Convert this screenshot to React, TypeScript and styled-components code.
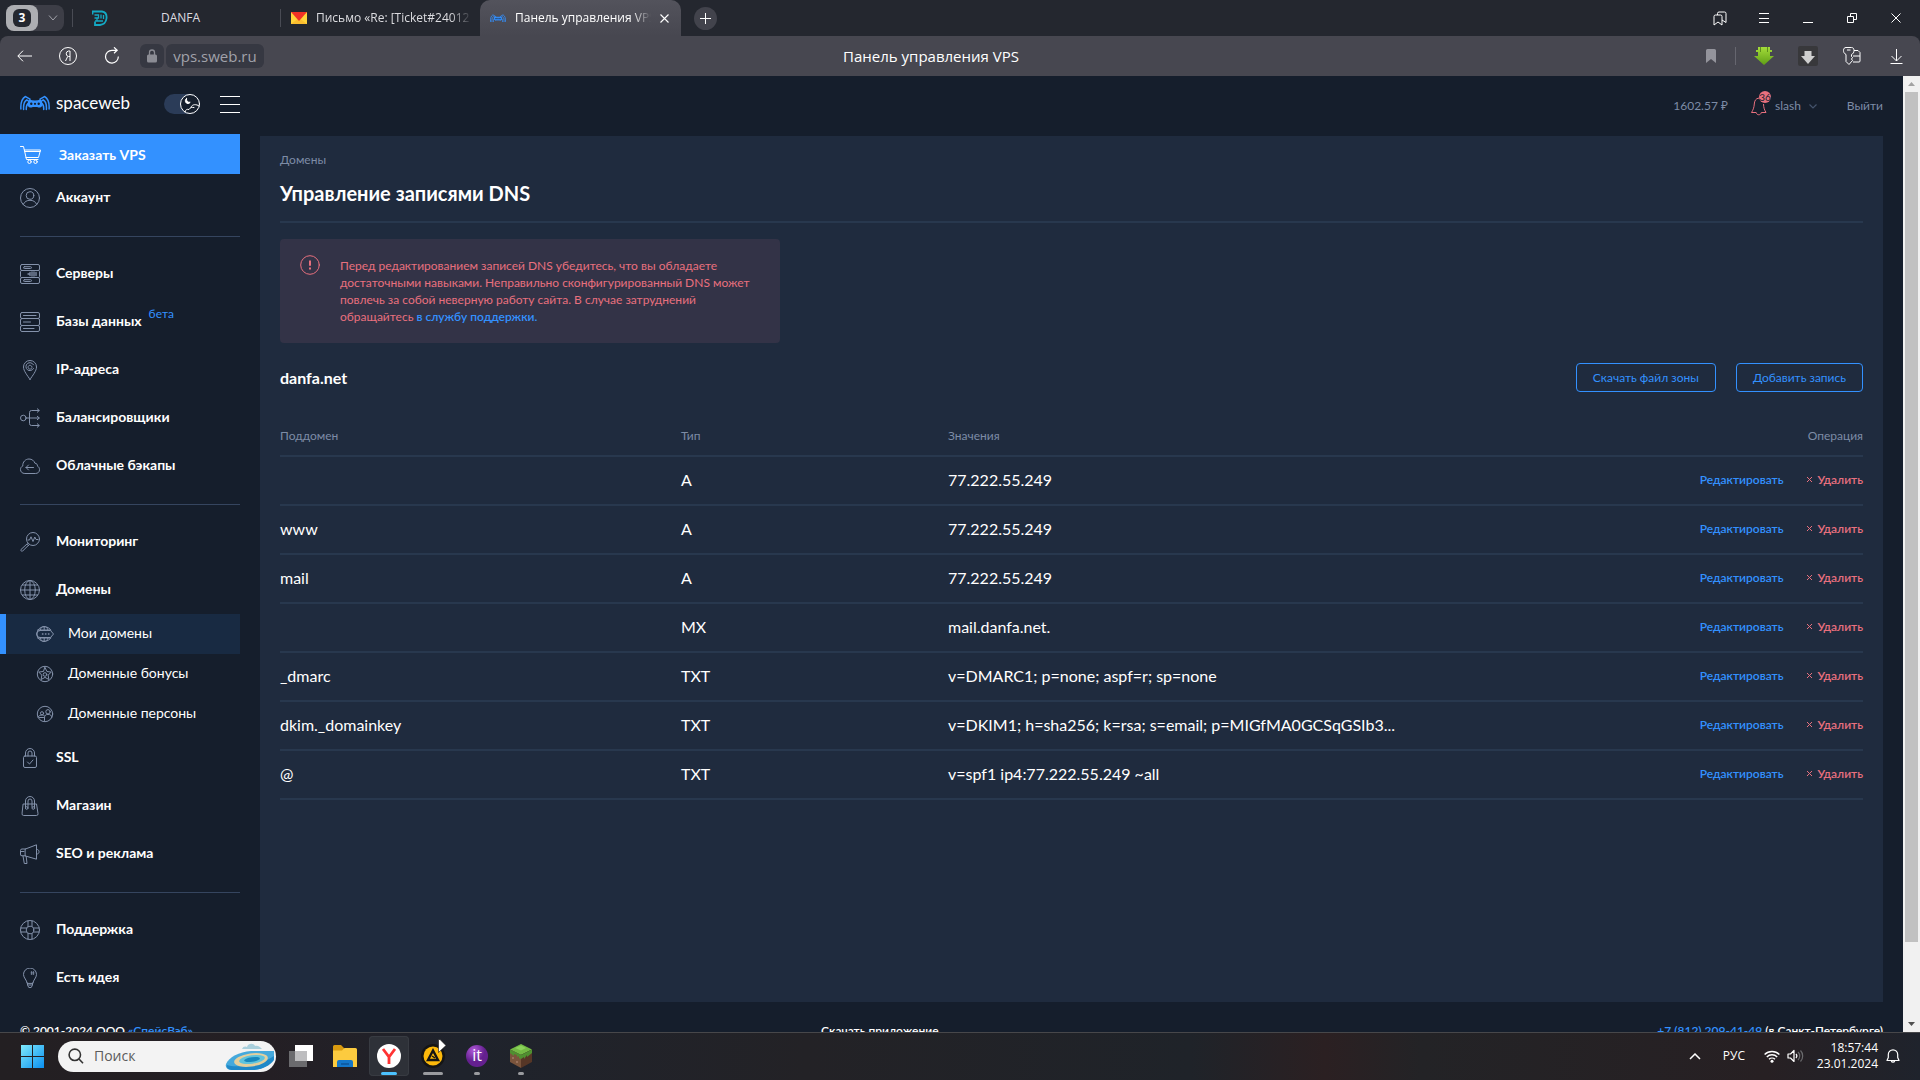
import React from "react";
import styled, { createGlobalStyle, css } from "styled-components";

const uiFont = `Lato, "Noto Sans", sans-serif`;
const systemFont = `"Open Sans", "Noto Sans", sans-serif`;

const color = {
  page: "#151e2c",
  panel: "#1f2b3e",
  line: "#28384e",
  divider: "#35455f",
  blue: "#3391ff",
  red: "#e8707e",
  muted: "#7d8ca6",
  icon: "#8492ab",
  white: "#ffffff",
};

const GlobalStyle = createGlobalStyle`
  *, *::before, *::after { box-sizing: border-box; }
  body { margin: 0; background: ${color.page}; color: ${color.white}; font-family: ${uiFont}; }
  button, input { font: inherit; color: inherit; }
  button { margin: 0; padding: 0; border: 0; background: none; cursor: pointer; }
  a { text-decoration: none; color: inherit; }
  svg { display: block; flex: none; }
`;

/* ---------- window frame ---------- */

const Screen = styled.div`
  display: flex;
  flex-direction: column;
  height: 100vh;
  overflow: hidden;
`;

const TabStrip = styled.header`
  flex: none;
  display: flex;
  align-items: center;
  height: 36px;
  padding-left: 6px;
  background: #24272f;
  font: 12px/18px ${systemFont};
`;

const TabGroup = styled.button`
  display: flex;
  align-items: center;
  width: 58px;
  height: 26px;
  margin-right: 8px;
  padding-right: 6px;
  justify-content: space-between;
  border-radius: 8px;
  background: #3d3e47;
`;

const TabCount = styled.span`
  display: grid;
  place-items: center;
  width: 32px;
  height: 26px;
  border-radius: 8px;
  background: #adaeb2;
  > span {
    width: 18px;
    height: 18px;
    border-radius: 6px;
    background: #24272f;
    font-weight: 700;
    text-align: center;
  }
`;

const StripDivider = styled.i`
  width: 1px;
  height: 18px;
  background: #494b54;
`;

const Tab = styled.button<{ $active?: boolean }>`
  display: flex;
  align-items: center;
  gap: 9px;
  height: 36px;
  padding: 0 10px;
  color: ${(p) => (p.$active ? "#fff" : "#dcdce0")};
  ${(p) =>
    p.$active &&
    css`
      border-radius: 10px 10px 0 0;
      background: linear-gradient(#53535c, #474750);
    `}
`;

const TabTitle = styled.span<{ $center?: boolean; $fade?: boolean }>`
  flex: 1;
  min-width: 0;
  overflow: hidden;
  white-space: nowrap;
  text-align: ${(p) => (p.$center ? "center" : "left")};
  ${(p) =>
    p.$fade &&
    css`
      mask-image: linear-gradient(90deg, #000 86%, transparent);
    `}
`;

const FirstTab = styled(Tab)`
  width: 207px;
  padding: 0 36px 0 19px;
`;
const MailTab = styled(Tab)`
  width: 199px;
  padding: 0 8px 0 10px;
`;
const ActiveTab = styled(Tab)`
  width: 201px;
  padding: 0 12px 0 10px;
`;

const AddTab = styled.button`
  display: grid;
  place-items: center;
  width: 23px;
  height: 23px;
  margin-left: 13px;
  border-radius: 50%;
  background: #42434c;
`;

const WindowButtons = styled.div`
  display: flex;
  margin-left: auto;
  padding-right: 2px;
`;

const BarButton = styled.button`
  display: grid;
  place-items: center;
  width: 44px;
  height: 36px;
`;

const ChromeBack = styled.div`
  flex: none;
  background: #24272f;
`;

const Toolbar = styled.div`
  display: grid;
  grid-template-columns: 1fr auto 1fr;
  align-items: center;
  height: 40px;
  padding: 0 2px;
  border-radius: 8px 8px 0 0;
  background: #474750;
  font: 15px/20px ${systemFont};
`;

const PageTitle = styled.span`
  margin-right: 58px;
`;

const NavGroup = styled.div<{ $end?: boolean }>`
  display: flex;
  align-items: center;
  justify-content: ${(p) => (p.$end ? "flex-end" : "flex-start")};
`;

const ToolDivider = styled(StripDivider)`
  margin: 0 6px 0 2px;
  background: #66666f;
`;

const AddressChip = styled.button<{ $wide?: boolean }>`
  display: grid;
  place-items: center;
  height: 24px;
  width: ${(p) => (p.$wide ? "98px" : "24px")};
  margin-left: ${(p) => (p.$wide ? "2px" : "6px")};
  border-radius: 6px;
  background: #363842;
  color: #a1a2aa;
`;

/* ---------- page viewport ---------- */

const Viewport = styled.div`
  flex: 1;
  min-height: 0;
  display: flex;
  overflow: hidden;
`;

const Page = styled.div`
  flex: 1;
  min-width: 0;
  height: calc(100% + 28px);
  display: flex;
  flex-direction: column;
  background: ${color.page};
`;

const ScrollTrack = styled.div`
  display: flex;
  flex-direction: column;
  align-items: center;
  justify-content: space-between;
  width: 17px;
  height: 100%;
  padding: 6px 0;
  background: #f1f1f1;
`;

const ScrollThumb = styled.i`
  width: 13px;
  height: 90%;
  margin-bottom: auto;
  margin-top: 6px;
  background: #c1c1c1;
`;

const Columns = styled.div`
  flex: 1;
  min-height: 0;
  display: flex;
`;

const Sidebar = styled.aside`
  flex: none;
  width: 240px;
`;

const BrandRow = styled.div`
  display: flex;
  align-items: center;
  height: 58px;
  padding: 0 0 2px 20px;
`;

const Brand = styled.a`
  display: flex;
  align-items: center;
  gap: 6px;
  width: 144px;
  padding-bottom: 2px;
  font-size: 17px;
  line-height: 24px;
`;

const ThemeSwitch = styled.label`
  position: relative;
  width: 36px;
  height: 20px;
  margin-right: 20px;
  input {
    appearance: none;
    display: block;
    width: 36px;
    height: 20px;
    margin: 0;
    border-radius: 10px;
    background: #2b3c58;
  }
  svg {
    position: absolute;
    top: 0;
    right: 0;
  }
`;

const MenuButton = styled.button`
  display: flex;
  flex-direction: column;
  gap: 7px;
  width: 20px;
  i {
    height: 1px;
    background: #fff;
  }
`;

const OrderLink = styled.a`
  display: flex;
  align-items: center;
  gap: 18px;
  height: 40px;
  padding: 2px 0 0 20px;
  background: ${color.blue};
  font-size: 14px;
  line-height: 20px;
  font-weight: 700;
`;

const NavLink = styled.a`
  display: flex;
  align-items: center;
  gap: 16px;
  height: 48px;
  padding-left: 20px;
  font-size: 14px;
  line-height: 20px;
  font-weight: 700;
  svg {
    color: ${color.icon};
  }
`;

const NavLabel = styled.span`
  padding-bottom: 2px;
`;

const Beta = styled.sup`
  align-self: flex-start;
  margin: 7px 0 0 -9px;
  color: ${color.blue};
  font-size: 12px;
  line-height: 18px;
  font-weight: 400;
`;

const SubLink = styled.a<{ $active?: boolean }>`
  display: flex;
  align-items: center;
  gap: 14px;
  height: 40px;
  padding-left: ${(p) => (p.$active ? "30px" : "36px")};
  border-left: ${(p) => (p.$active ? `6px solid ${color.blue}` : "0")};
  background: ${(p) => (p.$active ? "#182a42" : "none")};
  font-size: 14px;
  line-height: 20px;
  svg {
    color: ${color.icon};
  }
`;

const NavDivider = styled.hr`
  height: 1px;
  margin: 14px 0 13px 20px;
  border: 0;
  background: ${color.divider};
`;

const Main = styled.main`
  flex: 1;
  min-width: 0;
  display: flex;
  flex-direction: column;
  padding: 0 20px;
`;

const AccountBar = styled.div`
  flex: none;
  display: flex;
  align-items: center;
  justify-content: flex-end;
  height: 60px;
  color: ${color.muted};
  font-size: 12px;
  line-height: 18px;
`;

const Balance = styled.a`
  margin-right: 23px;
`;

const UserButton = styled.button`
  display: flex;
  align-items: center;
  gap: 8px;
  margin-right: 30px;
`;

const BellWrap = styled.span`
  position: relative;
  width: 16px;
  height: 20px;
`;

const BellCount = styled.span`
  position: absolute;
  top: -5px;
  left: 8px;
  width: 12px;
  height: 12px;
  border-radius: 6px;
  background: ${color.red};
  color: ${color.page};
  font-size: 10px;
  line-height: 12px;
  text-align: center;
`;

const Panel = styled.section`
  flex: 1;
  padding: 15px 20px 0;
  background: ${color.panel};
`;

const Crumbs = styled.nav`
  color: ${color.muted};
  font-size: 12px;
  line-height: 18px;
`;

const Title = styled.h1`
  margin: 9px 0 0;
  padding-bottom: 13px;
  border-bottom: 2px solid ${color.line};
  font-size: 20px;
  line-height: 30px;
  font-weight: 700;
`;

const Alert = styled.div`
  display: flex;
  gap: 20px;
  width: 500px;
  margin-top: 16px;
  padding: 16px 20px 18px;
  border-radius: 4px;
  background: #333347;
  color: ${color.red};
  font-size: 12px;
  line-height: 17px;
  p {
    margin: 2px 0 0;
  }
  a {
    color: ${color.blue};
    font-weight: 600;
  }
`;

const DomainRow = styled.div`
  display: flex;
  align-items: center;
  gap: 20px;
  margin-top: 20px;
  h2 {
    margin: 0 auto 0 0;
    font-size: 16px;
    line-height: 24px;
    font-weight: 700;
  }
`;

const OutlineButton = styled.button`
  height: 29px;
  padding: 0 16px;
  border: 1px solid ${color.blue};
  border-radius: 4px;
  color: ${color.blue};
  font-size: 12px;
  line-height: 18px;
`;

const Records = styled.table`
  width: 100%;
  margin-top: 24px;
  table-layout: fixed;
  border-collapse: collapse;
  text-align: left;
  th {
    height: 40px;
    padding: 0;
    border-bottom: 2px solid ${color.line};
    color: ${color.muted};
    font-size: 12px;
    line-height: 18px;
    font-weight: 400;
  }
  td {
    height: 49px;
    padding: 0 0 2px;
    border-bottom: 2px solid ${color.line};
    font-size: 16px;
    line-height: 24px;
  }
  th:last-child,
  td:last-child {
    text-align: right;
  }
`;

const Col = styled.col<{ $width: string }>`
  width: ${(p) => p.$width};
`;

const RowActions = styled.div`
  display: flex;
  justify-content: flex-end;
  gap: 24px;
  font-size: 12px;
  line-height: 18px;
  font-weight: 600;
`;

const EditButton = styled.button`
  color: ${color.blue};
`;

const DeleteButton = styled.button`
  display: flex;
  align-items: center;
  gap: 5px;
  color: ${color.red};
`;

const Footer = styled.footer`
  flex: none;
  display: grid;
  grid-template-columns: 43% 1fr auto;
  align-items: center;
  height: 58px;
  padding: 0 20px;
  font-size: 12px;
  line-height: 18px;
  font-weight: 600;
  a {
    color: ${color.blue};
  }
`;

/* ---------- taskbar ---------- */

const Taskbar = styled.nav`
  flex: none;
  display: flex;
  align-items: center;
  height: 48px;
  padding: 0 20px 1px;
  border-top: 1px solid #47474a;
  background: linear-gradient(
    90deg,
    #231f22 0%,
    #241f24 14%,
    #1f232c 24%,
    #232226 42%,
    #1f2329 62%,
    #2b2022 69%,
    #232326 74%,
    #272023 92%,
    #1f232c 100%
  );
  font: 12px/16px ${systemFont};
`;

const SearchBox = styled.label`
  display: flex;
  align-items: center;
  gap: 10px;
  width: 218px;
  height: 31px;
  margin: 0 3px 0 14px;
  padding: 0 1px 0 10px;
  border-radius: 16px;
  background: #f3f3f3;
  input {
    flex: 1;
    min-width: 0;
    padding: 0;
    border: 0;
    outline: 0;
    background: none;
    color: #5c5c5c;
    font-size: 14px;
    line-height: 20px;
  }
  input::placeholder {
    color: #5c5c5c;
  }
`;

const AppButton = styled.button<{ $active?: boolean }>`
  position: relative;
  display: grid;
  place-items: center;
  width: 40px;
  height: 40px;
  margin: 0 2px;
  border-radius: 4px;
  background: ${(p) => (p.$active ? "#2e3138" : "none")};
  box-shadow: ${(p) => (p.$active ? "inset 0 0 0 1px #383b42" : "none")};
`;

const Running = styled.i<{ $width: number; $accent?: boolean }>`
  position: absolute;
  bottom: 1px;
  left: 50%;
  width: ${(p) => p.$width}px;
  height: 3px;
  margin-left: -${(p) => p.$width / 2}px;
  border-radius: 2px;
  background: ${(p) => (p.$accent ? "#4cc2ff" : "#9a9b9f")};
`;

const Pointer = styled.svg`
  position: absolute;
  top: 3px;
  left: 25px;
`;

const Tray = styled.div`
  display: flex;
  align-items: center;
  margin-left: auto;
`;

const TrayButton = styled.button<{ $space: string }>`
  margin-right: ${(p) => p.$space};
`;

const Clock = styled.time`
  width: 72px;
  margin-right: 8px;
  text-align: right;
`;

/* ---------- icons ---------- */

const Line = ({ size = 20, box = 20, children }: { size?: number; box?: number; children: React.ReactNode }) => (
  <svg width={size} height={size} viewBox={`0 0 ${box} ${box}`} fill="none" stroke="currentColor" strokeWidth="1" strokeLinecap="round" strokeLinejoin="round" aria-hidden="true">
    {children}
  </svg>
);

const SpiderLogo = ({ width = 30 }: { width?: number }) => (
  <svg width={width} height={(width * 16) / 30} viewBox="0 0 30 16" fill="none" stroke={color.blue} strokeWidth="1.500" strokeLinecap="round" aria-hidden="true">
    <path d="M.9 14C.5 8 2 3.500 5.500 1.500L10 4.200M3.600 14.500C3.300 10 4 6.500 6.800 5L9 6.500M6.300 14.500C6.100 11.500 6.500 9.500 8.500 8.500" />
    <path d="M29.100 14C29.500 8 28 3.500 24.500 1.500L20 4.200M26.400 14.500C26.700 10 26 6.500 23.200 5L21 6.500M23.700 14.500C23.900 11.500 23.500 9.500 21.500 8.500" />
    <path d="M9.500 5.200C12 6.500 18 6.500 20.500 5.200L22 9C22 11.800 19.500 12.200 17.500 11.300H12.500C10.500 12.200 8 11.800 8 9Z" fill={color.blue} />
    <circle cx="11.300" cy="8.800" r="1.200" fill={color.page} stroke="none" />
    <circle cx="15" cy="8.800" r="1.100" fill={color.page} stroke="none" />
    <circle cx="18.700" cy="8.800" r="1.200" fill={color.page} stroke="none" />
  </svg>
);

const icons: Record<string, React.ReactNode> = {
  account: (
    <>
      <circle cx="10" cy="10" r="9.500" />
      <circle cx="10" cy="7.500" r="3.800" />
      <path d="M3.200 16.500C4.500 13.500 7 12.300 10 12.300s5.500 1.200 6.800 4.200" />
    </>
  ),
  servers: (
    <>
      <rect x=".5" y=".5" width="19" height="6" rx="1.500" />
      <rect x=".5" y="6.500" width="19" height="7" rx="1" />
      <rect x=".5" y="13.500" width="19" height="6" rx="1.500" />
      <rect x="3.500" y="2.700" width="8" height="1.800" rx=".9" />
      <rect x="3.500" y="15.700" width="8" height="1.800" rx=".9" />
      <path d="M8 10h1M10 8.500v3M12 8v4M14 8v4M16 8.500v3" strokeWidth="1.300" />
    </>
  ),
  databases: (
    <>
      <rect x=".5" y=".5" width="19" height="6" rx="1.500" />
      <rect x=".5" y="6.500" width="19" height="7" rx="1.500" />
      <rect x=".5" y="13.500" width="19" height="6" rx="1.500" />
      <path d="M3.500 3.500H16M3.500 10H10.500M3.500 16.500H14" />
    </>
  ),
  ip: (
    <>
      <path d="M10 19.500C7.500 15.500 3.500 11 3.500 7a6.500 6.500 0 0 1 13 0c0 4-4 8.500-6.500 12.500Z" />
      <path d="M13.500 4.800A4 4 0 1 0 13.500 8.500M12 6.700a2 2 0 1 0 0 1" />
    </>
  ),
  balancer: (
    <>
      <circle cx="3.300" cy="10" r="2.800" />
      <path d="M6.200 10H19M9.500 10V4.500a2 2 0 0 1 2-2H19M9.500 10v5.500a2 2 0 0 0 2 2H19M17.300.8 19.300 2.500 17.300 4.200M17.300 8.300l2 1.700-2 1.700M17.300 15.800l2 1.700-2 1.700" />
    </>
  ),
  cloud: (
    <>
      <path d="M4.500 17.500C2 17.500.5 15.700.5 13.500c0-1.700 1-3 2.300-3.600C2.500 6 5.500 3 9 3c3 0 5 1.700 5.900 4.200 2 .1 2.600 1.500 2.600 3 1.300.6 2 1.800 2 3.500 0 2.300-1.600 3.800-3.800 3.800Z" />
      <path d="M13.500 11.500H6M8.500 9 6 11.500 8.500 14" />
    </>
  ),
  monitoring: (
    <>
      <circle cx="13" cy="7" r="6.500" />
      <path d="M8 8h1.500L11 4.800 13 9.500 14.800 5 16 7.500h2M8.200 11.500 7.300 12.600M9 13 8 13.800M7.200 11.800 1 17.500c-.8.8.8 2.400 1.600 1.600L8.500 13.200" />
    </>
  ),
  globe: (
    <>
      <circle cx="10" cy="10" r="9.500" />
      <ellipse cx="10" cy="10" rx="5.300" ry="9.500" />
      <path d="M10 .5v19M.5 10h19M2.500 5h15M2.500 15h15" />
    </>
  ),
  ssl: (
    <>
      <rect x="3.500" y="8" width="13" height="11.500" rx="1.500" />
      <path d="M5.500 8V5a4.500 4.500 0 0 1 9 0v3M8 8V5a2 2 0 0 1 4 0v3M7.500 14l2 2 3.500-4" />
    </>
  ),
  shop: (
    <>
      <path d="M3.500 8h13l1.500 9.500a1.700 1.700 0 0 1-1.700 2H3.700a1.700 1.700 0 0 1-1.700-2Z" />
      <path d="M5.500 11V5a4.500 4.500 0 0 1 9 0v6M8 11V5a2 2 0 0 1 4 0v6" />
      <circle cx="6.700" cy="12" r="1.300" />
      <circle cx="13.300" cy="12" r="1.300" />
    </>
  ),
  seo: (
    <path d="M5.500 5 16.500.8V15.200L5.500 12ZM5.500 5H2A1.500 1.500 0 0 0 .5 6.500v3.500A1.500 1.500 0 0 0 2 11.800h3.500M1 7.500h3M16.500 5.500c3.500-1 3.500 5.500 0 4.500M3 12l1.300 7.500H7L6.200 12.500" />
  ),
  support: (
    <>
      <circle cx="10" cy="10" r="9.500" />
      <circle cx="10" cy="10" r="3.800" />
      <path d="M8 .8v5.600M12 .8v5.600M8 13.600v5.600M12 13.600v5.600M.8 8h5.600M.8 12h5.600M13.600 8h5.600M13.600 12h5.600" />
    </>
  ),
  idea: (
    <>
      <path d="M7 15c0-3-3.500-5-3.500-8.500a6.500 6.500 0 0 1 13 0C16.500 10 13 12 13 15ZM7.500 15v2M12.500 15v2M7.500 17h5M8 18l.8 1.500h2.400L12 18" />
      <path d="M11.500 3.500v3M13.500 3.500v3M11 4.300h3M11 5.900h3" strokeWidth=".7" />
    </>
  ),
  myDomains: (
    <>
      <path d="M14.800 5A7.500 7.500 0 1 0 14.800 13" />
      <path d="M12 5C11 .3 5 .3 4.200 5M4.200 13c.8 4.700 6.800 4.700 7.800 0M1.700 5h13M1.700 13h13M8.200 1.500V5M8.200 13v3.500" />
      <path d="M4 5.500h10.500L17.500 9l-3 3.500H4a3.500 3.500 0 0 1 0-7" />
      <path d="M6.500 9h.4M9.500 9h.4M12.500 9h.4" strokeWidth="1.500" />
    </>
  ),
  bonuses: (
    <>
      <circle cx="9" cy="9" r="7.700" />
      <circle cx="9" cy="9.500" r="1.800" />
      <path d="m9 2.500 1.900 4 4.400.6-3.200 3 .8 4.400L9 12.400l-3.900 2.100.8-4.400-3.200-3 4.400-.6Z" />
    </>
  ),
  persons: (
    <>
      <circle cx="9" cy="9" r="7.700" />
      <circle cx="12" cy="6.800" r="2.200" />
      <circle cx="6" cy="8.300" r="1.600" />
      <path d="M8.500 15.500V13c0-2.500 1.200-3.600 3.500-3.600s3.500 1 4 2.600M2 12c1-1.600 2.500-2 4-2 1.200 0 2 .3 2.600 1M3.500 12.500h4" />
    </>
  ),
};

const NavIcon = ({ name }: { name: string }) => <Line>{icons[name]}</Line>;
const SubIcon = ({ name }: { name: string }) => <Line size={18} box={18}>{icons[name]}</Line>;

/* ---------- data ---------- */

const resources = [
  { icon: "servers", label: "Серверы" },
  { icon: "databases", label: "Базы данных", beta: true },
  { icon: "ip", label: "IP-адреса" },
  { icon: "balancer", label: "Балансировщики" },
  { icon: "cloud", label: "Облачные бэкапы" },
];
const domainPages = [
  { icon: "myDomains", label: "Мои домены", active: true },
  { icon: "bonuses", label: "Доменные бонусы" },
  { icon: "persons", label: "Доменные персоны" },
];
const extras = [
  { icon: "ssl", label: "SSL" },
  { icon: "shop", label: "Магазин" },
  { icon: "seo", label: "SEO и реклама" },
];
const help = [
  { icon: "support", label: "Поддержка" },
  { icon: "idea", label: "Есть идея" },
];
const records = [
  ["", "A", "77.222.55.249"],
  ["www", "A", "77.222.55.249"],
  ["mail", "A", "77.222.55.249"],
  ["", "MX", "mail.danfa.net."],
  ["_dmarc", "TXT", "v=DMARC1; p=none; aspf=r; sp=none"],
  ["dkim._domainkey", "TXT", "v=DKIM1; h=sha256; k=rsa; s=email; p=MIGfMA0GCSqGSIb3..."],
  ["@", "TXT", "v=spf1 ip4:77.222.55.249 ~all"],
];

const NavItem = ({ icon, label, beta }: { icon: string; label: string; beta?: boolean }) => (
  <NavLink href="#">
    <NavIcon name={icon} />
    <NavLabel>{label}</NavLabel>
    {beta && <Beta>бета</Beta>}
  </NavLink>
);

/* ---------- sections ---------- */

const BrowserChrome = () => (
  <>
    <TabStrip>
      <TabGroup aria-label="Группа вкладок">
        <TabCount><span>3</span></TabCount>
        <svg width="10" height="6" viewBox="0 0 10 6" fill="none" stroke="#a1a2aa"><path d="m1 .5 4 4.500 4-4.500" /></svg>
      </TabGroup>
      <StripDivider />
      <FirstTab>
        <svg width="16" height="16" viewBox="0 0 16 16" fill="none" stroke="#14a9c4" strokeWidth="1.800">
          <path d="M.5 4.500V1.500H10C13 2 15 4.500 14.500 8.500S12 14.500 8 15H3V11.500" />
          <path d="M2.500 5h4v3h-4M3 11h8M9 4.500v4M11.500 5v4M5 8v3" strokeWidth="1.300" />
        </svg>
        <TabTitle $center>DANFA</TabTitle>
      </FirstTab>
      <StripDivider />
      <MailTab>
        <svg width="16" height="12" viewBox="0 0 16 12"><path fill="#ffd43b" d="M0 0h16v12H0z" /><path fill="#fbbd2f" d="M0 12 8 6l8 6z" /><path fill="#f03226" d="M0 0h16L8 9z" /></svg>
        <TabTitle $fade>Письмо «Re: [Ticket#24012</TabTitle>
      </MailTab>
      <ActiveTab $active>
        <SpiderLogo width={16} />
        <TabTitle $fade>Панель управления VPS</TabTitle>
        <svg width="9" height="9" viewBox="0 0 9 9" stroke="#fff" strokeWidth="1.100"><path d="m.5.5 8 8m0-8-8 8" /></svg>
      </ActiveTab>
      <AddTab aria-label="Новая вкладка">
        <svg width="11" height="11" viewBox="0 0 11 11" stroke="#fff"><path d="M5.500 0v11M0 5.500h11" /></svg>
      </AddTab>
      <WindowButtons>
        <BarButton aria-label="Коллекции">
          <svg width="14" height="15" viewBox="0 0 14 15" fill="none" stroke="#fff" strokeLinejoin="round"><path d="M1 5.500A1.500 1.500 0 0 1 2.500 4h5A1.500 1.500 0 0 1 9 5.500V14l-4-3-4 3ZM4.500 4V2.500A1.500 1.500 0 0 1 6 1h5.500A1.500 1.500 0 0 1 13 2.500v9L9 9" /></svg>
        </BarButton>
        <BarButton aria-label="Меню">
          <svg width="10" height="10" viewBox="0 0 10 10" stroke="#fff"><path d="M0 .5h10M0 5.500h10M0 9.500h10" /></svg>
        </BarButton>
        <BarButton aria-label="Свернуть">
          <svg width="10" height="10" viewBox="0 0 10 10" stroke="#fff"><path d="M0 9.500h10" /></svg>
        </BarButton>
        <BarButton aria-label="Окно">
          <svg width="10" height="10" viewBox="0 0 10 10" fill="none" stroke="#fff"><path d="M.5 3.500h6v6h-6zM3.500 3.500v-3h6v6h-3" /></svg>
        </BarButton>
        <BarButton aria-label="Закрыть">
          <svg width="10" height="10" viewBox="0 0 10 10" stroke="#fff"><path d="m.5.5 9 9m0-9-9 9" /></svg>
        </BarButton>
      </WindowButtons>
    </TabStrip>
    <ChromeBack>
      <Toolbar>
        <NavGroup>
          <BarButton aria-label="Назад">
            <svg width="15" height="12" viewBox="0 0 15 12" fill="none" stroke="#fff"><path d="M15 6H1M6 .7.8 6 6 11.300" /></svg>
          </BarButton>
          <BarButton aria-label="Яндекс">
            <svg width="18" height="18" viewBox="0 0 18 18" fill="none" stroke="#fff"><circle cx="9" cy="9" r="8.500" /><path d="M11 14V4H9.500a2.800 2.800 0 0 0 0 5.500H11M8.700 9.500 6.500 14" /></svg>
          </BarButton>
          <BarButton aria-label="Обновить">
            <svg width="16" height="18" viewBox="0 0 16 18" fill="none" stroke="#fff" strokeWidth="1.200"><path d="M14.300 9.500A6.400 6.400 0 1 1 8 3.300h5M10 .3l3.200 3L10 6.300" /></svg>
          </BarButton>
          <AddressChip aria-label="Защищённое соединение">
            <svg width="10" height="14" viewBox="0 0 10 14"><path d="M2.500 6V3.500a2.500 2.500 0 0 1 5 0V6" fill="none" stroke="#8b8c94" strokeWidth="1.300" /><rect y="5.500" width="10" height="8" rx="1.500" fill="#8b8c94" /></svg>
          </AddressChip>
          <AddressChip $wide>vps.sweb.ru</AddressChip>
        </NavGroup>
        <PageTitle>Панель управления VPS</PageTitle>
        <NavGroup $end>
          <BarButton aria-label="Закладка">
            <svg width="10" height="14" viewBox="0 0 10 14"><path d="M0 1.500A1.500 1.500 0 0 1 1.500 0h7A1.500 1.500 0 0 1 10 1.500V14l-5-4-5 4Z" fill="#94949c" /></svg>
          </BarButton>
          <ToolDivider />
          <BarButton aria-label="SaveFrom">
            <svg width="20" height="18" viewBox="0 0 20 18"><defs><linearGradient id="leaf" x2="0" y2="1"><stop stopColor="#a4dd3a" /><stop offset="1" stopColor="#5f9e16" /></linearGradient></defs><path d="M4 0h12v3h2v2h-2v4h4L10 18 0 9h4V5H2V3h2Z" fill="url(#leaf)" /><path d="M6.500 0v5M13.500 0v5" stroke="#5d8f1c" /></svg>
          </BarButton>
          <BarButton aria-label="Загрузчик">
            <svg width="20" height="20" viewBox="0 0 20 20"><rect width="20" height="20" rx="2" fill="#38383b" /><path d="M6.500 5h7v5H17l-7 8-7-8h3.500Z" fill="#cfcfcf" /></svg>
          </BarButton>
          <BarButton aria-label="Пароли">
            <svg width="18" height="18" viewBox="0 0 18 18" fill="none" stroke="#fff" strokeLinejoin="round"><path d="M3 7.500C1 6.500.5 5 .5 3.500.5 1.500 1.500.5 3 .5h5.500c1.500 0 2.500 1 2.500 3s-.8 3.200-2.500 4v2l1 1-1 1.500 1 1.500L6 17.500l-3-3ZM4 3h3.500M11 3.500h4l2 2V14a1 1 0 0 1-1 1h-6M10 9h7" /></svg>
          </BarButton>
          <BarButton aria-label="Загрузки">
            <svg width="13" height="15" viewBox="0 0 13 15" fill="none" stroke="#fff"><path d="M6.500 0v12M1.500 7l5 5 5-5M.5 14.500h12" /></svg>
          </BarButton>
        </NavGroup>
      </Toolbar>
    </ChromeBack>
  </>
);

const SideNav = () => (
  <Sidebar>
    <BrandRow>
      <Brand href="#"><SpiderLogo />spaceweb</Brand>
      <ThemeSwitch aria-label="Тёмная тема">
        <input type="checkbox" defaultChecked aria-label="Тёмная тема" />
        <Line>
          <g stroke="#fff">
            <circle cx="10" cy="10" r="9.500" fill={color.page} />
            <path d="M6.500 4.500c-2 1.200-1.500 5 1.500 5 1 0 1.800-.5 2.200-1.200C7.500 8.500 6 7 6.500 4.500Z" fill="#fff" />
            <path d="M5 18c.5-2.500 2-3 4-2.500C10 13.500 12 13 14 13.500M11 13c1.500-3 5-3 8.300-1" />
          </g>
        </Line>
      </ThemeSwitch>
      <MenuButton aria-label="Свернуть меню"><i /><i /><i /></MenuButton>
    </BrandRow>
    <OrderLink href="#">
      <svg width="21" height="18" viewBox="0 0 21 18" fill="none" stroke="#fff" strokeLinejoin="round" strokeLinecap="round" aria-hidden="true">
        <path d="M.5.5h3L6.500 13.500H18M4.500 4h16L18.500 11.500H6M5 5.500h15" />
        <circle cx="9.500" cy="15.800" r="1.700" /><circle cx="15.500" cy="15.800" r="1.700" />
      </svg>
      Заказать VPS
    </OrderLink>
    <NavItem icon="account" label="Аккаунт" />
    <NavDivider />
    {resources.map((item) => <NavItem key={item.label} {...item} />)}
    <NavDivider />
    <NavItem icon="monitoring" label="Мониторинг" />
    <NavItem icon="globe" label="Домены" />
    {domainPages.map((item) => (
      <SubLink key={item.label} href="#" $active={item.active}>
        <SubIcon name={item.icon} />
        <NavLabel>{item.label}</NavLabel>
      </SubLink>
    ))}
    {extras.map((item) => <NavItem key={item.label} {...item} />)}
    <NavDivider />
    {help.map((item) => <NavItem key={item.label} {...item} />)}
  </Sidebar>
);

const DnsPage = () => (
  <Main>
    <AccountBar>
      <Balance href="#">1602.57 ₽</Balance>
      <UserButton>
        <BellWrap>
          <svg width="16" height="20" viewBox="0 0 16 20" fill="none" stroke={color.red} strokeLinejoin="round"><path d="M8 2C4.500 2.500 3.500 5 3.300 8 3 12 2 14 .5 16.500h4.700C5.700 19.500 9.800 19.500 10.300 16.500h4.700C13.500 14 12.700 12 12.500 8" /></svg>
          <BellCount>36</BellCount>
        </BellWrap>
        slash
        <svg width="8" height="5" viewBox="0 0 8 5" fill="none" stroke="#44536c" strokeWidth="1.200"><path d="m.5.5 3.500 3.500 3.500-3.500" /></svg>
      </UserButton>
      <a href="#">Выйти</a>
    </AccountBar>
    <Panel>
      <Crumbs><a href="#">Домены</a></Crumbs>
      <Title>Управление записями DNS</Title>
      <Alert role="alert">
        <Line>
          <circle cx="10" cy="10" r="9.300" />
          <path d="M10 5.500v5.200" strokeWidth="2" strokeLinecap="butt" />
          <path d="M10 12.500v2" strokeWidth="2" strokeLinecap="butt" />
        </Line>
        <p>
          Перед редактированием записей DNS убедитесь, что вы обладаете<br />
          достаточными навыками. Неправильно сконфигурированный DNS может<br />
          повлечь за собой неверную работу сайта. В случае затруднений<br />
          обращайтесь <a href="#">в службу поддержки.</a>
        </p>
      </Alert>
      <DomainRow>
        <h2>danfa.net</h2>
        <OutlineButton>Скачать файл зоны</OutlineButton>
        <OutlineButton>Добавить запись</OutlineButton>
      </DomainRow>
      <Records>
        <colgroup>
          <Col $width="401px" />
          <Col $width="267px" />
          <Col $width="auto" />
          <Col $width="200px" />
        </colgroup>
        <thead>
          <tr><th>Поддомен</th><th>Тип</th><th>Значения</th><th>Операция</th></tr>
        </thead>
        <tbody>
          {records.map(([name, type, value], i) => (
            <tr key={i}>
              <td>{name}</td>
              <td>{type}</td>
              <td>{value}</td>
              <td>
                <RowActions>
                  <EditButton>Редактировать</EditButton>
                  <DeleteButton>
                    <svg width="5" height="5" viewBox="0 0 5 5" stroke="currentColor"><path d="m0 0 5 5m0-5-5 5" /></svg>
                    Удалить
                  </DeleteButton>
                </RowActions>
              </td>
            </tr>
          ))}
        </tbody>
      </Records>
    </Panel>
  </Main>
);

const SystemBar = () => (
  <Taskbar>
    <button aria-label="Пуск">
      <svg width="24" height="24" viewBox="0 0 24 24"><defs><linearGradient id="win" gradientUnits="userSpaceOnUse" x1="1" y1="1" x2="24" y2="24"><stop stopColor="#7feafc" /><stop offset="1" stopColor="#0a8ff0" /></linearGradient></defs><path d="M1 1h11v11H1zM13 1h11v11H13zM1 13h11v11H1zM13 13h11v11H13z" fill="url(#win)" /></svg>
    </button>
    <SearchBox>
      <svg width="16" height="16" viewBox="0 0 16 16" fill="none" stroke="#333" strokeWidth="1.600"><circle cx="6.800" cy="6.800" r="5.700" /><path d="m11 11 4 4.300" /></svg>
      <input type="text" placeholder="Поиск" aria-label="Поиск" />
      <svg width="50" height="28" viewBox="0 0 50 28">
        <path d="M17 7c1-3 4-3 5-2 1-4 7-4 8-1 3-1 5 1 7 3Z" fill="#a9cfdc" />
        <path d="M1 22C4 15 14 10 26 9h23v6c-3 8-12 13-22 13H8c-5 0-8-2-7-6Z" fill="#45a9dc" />
        <path d="M2 23c8 3 32 1 47-9v4c-4 6-13 10-22 10H8c-4 0-7-2-6-5Z" fill="#2089c8" />
        <ellipse cx="26" cy="18" rx="17" ry="6.500" transform="rotate(-8 26 18)" fill="#e3cf9d" />
        <ellipse cx="27" cy="17.500" rx="13" ry="4.200" transform="rotate(-8 27 17.500)" fill="#5fc3dd" />
        <ellipse cx="27" cy="17.500" rx="8" ry="2.300" transform="rotate(-8 27 17.500)" fill="#1788bd" />
      </svg>
    </SearchBox>
    <AppButton aria-label="Представление задач">
      <svg width="24" height="22" viewBox="0 0 24 22"><path fill="#fff" d="M6 0h18v16H6z" /><path fill="#6b6b6e" d="M0 6h18v16H0z" /><path fill="#bdbdbf" d="M6 6h12v10H6z" /></svg>
    </AppButton>
    <AppButton aria-label="Проводник">
      <svg width="24" height="22" viewBox="0 0 24 22"><path fill="#d99a0f" d="M0 1.500A1.500 1.500 0 0 1 1.500 0H8l3 3v5H0z" /><path fill="#fccb3f" d="M0 5.500h9L11.500 3H22.500A1.500 1.500 0 0 1 24 4.500V22H0z" /><path fill="#1477c9" d="M4 22v-5a2 2 0 0 1 2-2h12a2 2 0 0 1 2 2v5z" /><path stroke="#0c5499" strokeWidth="1.500" d="M8 19h8" /></svg>
    </AppButton>
    <AppButton $active aria-label="Яндекс Браузер">
      <svg width="24" height="24" viewBox="0 0 24 24"><circle cx="12" cy="12" r="12" fill="#fff" /><path d="m6 5 6 8v7M18 5l-6 8" fill="none" stroke="#f33" strokeWidth="2.800" /></svg>
      <Running $width={16} $accent />
    </AppButton>
    <AppButton aria-label="AIMP">
      <svg width="24" height="24" viewBox="0 0 24 24"><circle cx="12" cy="12" r="12" fill="#151515" /><circle cx="12" cy="12" r="9.500" fill="#fdb90b" /><path d="M12 6.500 7 16h10Z" fill="none" stroke="#151515" strokeWidth="2.400" /><path d="m11 12 3 2" stroke="#151515" strokeWidth="1.500" /></svg>
      <Pointer width="9" height="15" viewBox="0 0 9 15"><path d="M.5.5v13L8 6.500 2 .5Z" fill="#fff" stroke="#111" strokeWidth=".6" /></Pointer>
      <Running $width={20} />
    </AppButton>
    <AppButton aria-label="iTop">
      <svg width="22" height="22" viewBox="0 0 22 22"><defs><radialGradient id="plum" cx=".35" cy=".25"><stop stopColor="#b05ad8" /><stop offset="1" stopColor="#64208f" /></radialGradient></defs><circle cx="11" cy="11" r="11" fill="url(#plum)" /><text x="11" y="16" textAnchor="middle" fontSize="16" fill="#fff" fontFamily="Open Sans, sans-serif">it</text></svg>
      <Running $width={6} />
    </AppButton>
    <AppButton aria-label="Minecraft">
      <svg width="22" height="24" viewBox="0 0 22 24"><path fill="#72b944" d="m11 0 11 5.500L11 11 0 5.500z" /><path fill="#8bd35a" d="m11 1.500 5 2.500-5 2.500L5 4z" /><path fill="#7a543c" d="M0 5.500 11 11v13L0 18z" /><path fill="#563626" d="M22 5.500 11 11v13l11-6z" /><path fill="#4f9030" d="M0 5.500 11 11v4l-2-1v-2l-2 1v-2l-3-1v2L0 9zM22 5.500 11 11v4l3-2v2l3-4v2l5-4z" /><path fill="#99705a" d="M2 13h2v2H2zM6 17h2v2H6z" /></svg>
      <Running $width={6} />
    </AppButton>
    <Tray>
      <TrayButton $space="22px" aria-label="Скрытые значки">
        <svg width="12" height="7" viewBox="0 0 12 7" fill="none" stroke="#fff" strokeWidth="1.500"><path d="m1 6 5-5 5 5" /></svg>
      </TrayButton>
      <TrayButton $space="19px">РУС</TrayButton>
      <TrayButton $space="7px" aria-label="Сеть">
        <svg width="16" height="13" viewBox="0 0 16 13" fill="none" stroke="#fff" strokeWidth="1.400"><path d="M.6 4.500a10.500 10.500 0 0 1 14.800 0M2.800 7a7.300 7.300 0 0 1 10.400 0M5 9.300a4.300 4.300 0 0 1 6 0" /><circle cx="8" cy="11.300" r="1.500" fill="#fff" stroke="none" /></svg>
      </TrayButton>
      <TrayButton $space="2px" aria-label="Звук">
        <svg width="17" height="14" viewBox="0 0 17 14" fill="none" stroke="#fff" strokeWidth="1.200"><path d="M1 5h2.500L7 1.500v11L3.500 9H1Z" strokeLinejoin="round" /><path d="M9 5a3 3 0 0 1 0 4" /><path d="M11 3a5.500 5.500 0 0 1 0 8M13.500 1.500a8 8 0 0 1 0 11" stroke="#6b6b6e" /></svg>
      </TrayButton>
      <Clock>18:57:44<br />23.01.2024</Clock>
      <button aria-label="Уведомления">
        <svg width="14" height="15" viewBox="0 0 14 15" fill="none" stroke="#fff" strokeWidth="1.200" strokeLinejoin="round"><path d="M7 .8A4.700 4.700 0 0 0 2.300 5.500v3L1 11.500h12L11.700 8.500v-3A4.700 4.700 0 0 0 7 .8ZM5.300 12a1.800 1.800 0 0 0 3.400 0" /></svg>
      </button>
    </Tray>
  </Taskbar>
);

export default function App() {
  return (
    <Screen>
      <GlobalStyle />
      <BrowserChrome />
      <Viewport>
        <Page>
          <Columns>
            <SideNav />
            <DnsPage />
          </Columns>
          <Footer>
            <span>© 2001-2024 ООО <a href="#">«СпейсВэб»</a></span>
            <span>Скачать приложение</span>
            <span><a href="#">+7 (812) 209-41-49</a> (в Санкт-Петербурге)</span>
          </Footer>
        </Page>
        <ScrollTrack aria-hidden="true">
          <svg width="7" height="4" viewBox="0 0 7 4"><path d="M0 4 3.500 0 7 4z" fill="#a3a3a3" /></svg>
          <ScrollThumb />
          <svg width="7" height="4" viewBox="0 0 7 4"><path d="m0 0 3.500 4L7 0z" fill="#505050" /></svg>
        </ScrollTrack>
      </Viewport>
      <SystemBar />
    </Screen>
  );
}
